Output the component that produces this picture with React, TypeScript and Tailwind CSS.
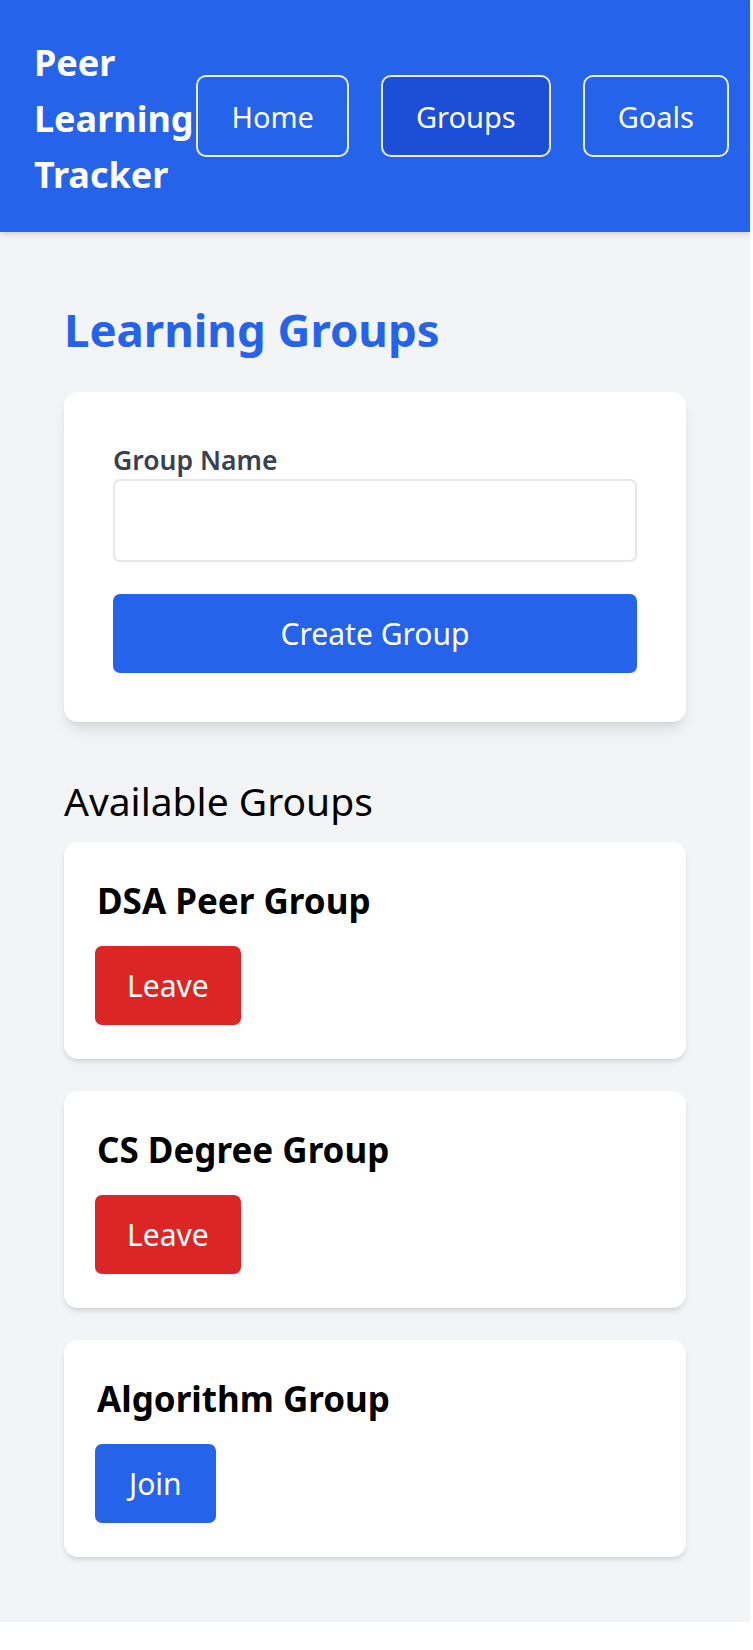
const groups = [
  { name: "DSA Peer Group", joined: true },
  { name: "CS Degree Group", joined: true },
  { name: "Algorithm Group", joined: false },
];

const navItems = [
  { label: "Home", active: false },
  { label: "Groups", active: true },
  { label: "Goals", active: false },
];

const App = () => {
  return (
    <div className="w-[750px] bg-[#f3f4f6] font-['Noto_Sans',sans-serif] text-black">
      {/* header */}
      <header className="h-[232px] bg-[#2563eb] shadow-md flex items-center justify-between pl-[34px] pr-[21px] text-white">
        <h1 className="text-[36px] leading-[56px] font-bold min-w-0 mt-[5px]">
          Peer Learning Tracker
        </h1>
        <nav className="flex gap-[32px] shrink-0">
          {navItems.map((item) => (
            <button
              key={item.label}
              className={
                item.active
                  ? "h-[82px] px-[33px] border-2 border-white/90 rounded-[10px] bg-[#1d4ed8] text-[29px] leading-[49px]"
                  : "h-[82px] px-[33px] border-2 border-white/90 rounded-[10px] text-[29px] leading-[49px]"
              }
            >
              {item.label}
            </button>
          ))}
        </nav>
      </header>

      <main className="px-[64px] pt-[66px] pb-[65px]">
        <h2 className="text-[45.5px] leading-[63px] font-bold text-[#2563eb] mb-[31px]">
          Learning Groups
        </h2>

        {/* create form */}
        <div className="bg-white rounded-[14px] shadow-lg p-[49px]">
          <label className="block text-[26.5px] leading-[38px] font-semibold text-[#374151]">
            Group Name
          </label>
          <input
            type="text"
            className="block w-full h-[83px] border-2 border-[#e5e7eb] rounded-[7px] px-[21px] text-[28px]"
          />
          <button className="mt-[32px] w-full h-[79px] bg-[#2563eb] text-white text-[30px] rounded-[7px]">
            Create Group
          </button>
        </div>

        <h3 className="mt-[54px] mb-[17px] text-[39px] leading-[49px]">
          Available Groups
        </h3>

        <div className="flex flex-col gap-[32px]">
          {groups.map((group) => (
            <div
              key={group.name}
              className="bg-white rounded-[14px] shadow-md pt-[34px] pb-[34px] pl-[31px] pr-[33px]"
            >
              <h4 className="text-[35px] leading-[49px] font-bold mb-[21px] pl-[2px]">
                {group.name}
              </h4>
              <button
                className={
                  group.joined
                    ? "h-[79px] px-[32px] bg-[#dc2626] text-white text-[30px] rounded-[7px]"
                    : "h-[79px] px-[34px] bg-[#2563eb] text-white text-[30px] rounded-[7px]"
                }
              >
                {group.joined ? "Leave" : "Join"}
              </button>
            </div>
          ))}
        </div>
      </main>
    </div>
  );
};

export default App;
